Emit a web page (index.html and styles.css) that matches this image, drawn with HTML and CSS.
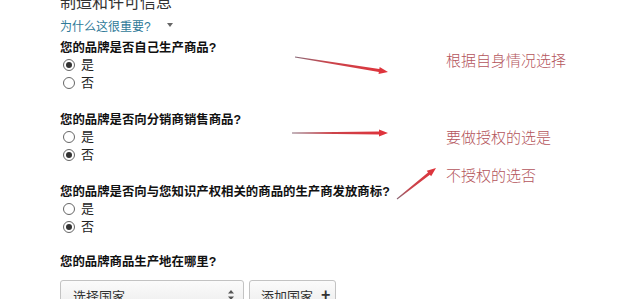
FILE: index.html
```html
<!DOCTYPE html>
<html lang="zh-CN">
<head>
<meta charset="utf-8">
<title>制造和许可信息</title>
<link rel="stylesheet" href="styles.css">
</head>
<body>
<div class="page">
  <main class="form">
    <h2 class="title">制造和许可信息</h2>
    <div class="why"><span class="why-text">为什么这很重要?</span><span class="caret"></span></div>

    <section class="group">
      <div class="question">您的品牌是否自己生产商品?</div>
      <label class="option"><span class="radio checked"></span>是</label>
      <label class="option"><span class="radio"></span>否</label>
    </section>

    <section class="group">
      <div class="question">您的品牌是否向分销商销售商品?</div>
      <label class="option"><span class="radio"></span>是</label>
      <label class="option"><span class="radio checked"></span>否</label>
    </section>

    <section class="group">
      <div class="question">您的品牌是否向与您知识产权相关的商品的生产商发放商标?</div>
      <label class="option"><span class="radio"></span>是</label>
      <label class="option"><span class="radio checked"></span>否</label>
    </section>

    <section class="group last">
      <div class="question">您的品牌商品生产地在哪里?</div>
      <div class="controls">
        <div class="select">
          <span>选择国家</span>
          <svg class="updown" width="6" height="10" viewBox="0 0 6 10"><path d="M3 0 L6 3.5 H0 Z M3 10 L6 6.5 H0 Z" fill="#555"/></svg>
        </div>
        <div class="button"><span>添加国家</span><span class="plus">+</span></div>
      </div>
    </section>
  </main>

  <div class="notes">
    <p class="note">根据自身情况选择</p>
    <p class="note n2">要做授权的选是</p>
    <p class="note n3">不授权的选否</p>
  </div>

  <svg class="arrows" width="640" height="299" viewBox="0 0 640 299">
    <defs>
      <linearGradient id="g1" x1="0" y1="0" x2="1" y2="0">
        <stop offset="0" stop-color="#8a6a78"/>
        <stop offset="0.35" stop-color="#c9454c"/>
        <stop offset="1" stop-color="#e0323a"/>
      </linearGradient>
    </defs>
    <polygon fill="url(#g1)" points="295.08,56.51 379.34,69.09 379.66,67.1 388,72 378.54,74 378.86,72.05 294.92,57.49"/>
    <polygon fill="url(#g1)" points="292,132.6 379,131.6 379,129.5 388,133 379,136.5 379,134.4 292,133.4"/>
    <polygon fill="url(#g1)" points="396.69,198.61 428.02,172.43 426.77,170.86 436,168 431.13,176.34 429.88,174.77 397.31,199.39"/>
  </svg>
</div>
</body>
</html>
```

FILE: styles.css
```css
html, body {
  margin: 0;
  padding: 0;
  background: #ffffff;
}

body {
  font-family: "Liberation Sans", "Noto Sans CJK SC", sans-serif;
  color: #222;
  overflow: hidden;
  width: 640px;
  height: 299px;
}

.page {
  position: relative;
  width: 640px;
  height: 299px;
  overflow: hidden;
}

.form {
  padding-left: 60px;
  width: 340px;
}

.title {
  margin: -6px 0 0 0;
  height: 18px;
  font-size: 16px;
  line-height: 18px;
  font-weight: normal;
  color: #333;
}

.why {
  margin-top: 6px;
  height: 18px;
  line-height: 18px;
  font-size: 12px;
  color: #2f7a99;
  display: flex;
  align-items: center;
}

.caret {
  margin-left: 16px;
  width: 0;
  height: 0;
  border-left: 3px solid transparent;
  border-right: 3px solid transparent;
  border-top: 4px solid #666;
  margin-top: -4px;
}

.group {
  margin-top: 3px;
  margin-bottom: 19px;
}

.group + .group {
  margin-top: 0;
}

.question {
  height: 18px;
  line-height: 18px;
  font-size: 12.4px;
  font-weight: bold;
  color: #111;
  white-space: nowrap;
}

.option {
  display: flex;
  align-items: center;
  height: 18px;
  line-height: 18px;
  font-size: 13px;
  color: #222;
}

.option:first-of-type {
  margin-top: -1px;
}

.radio {
  box-sizing: border-box;
  width: 12px;
  height: 12px;
  border: 1px solid #666;
  border-radius: 50%;
  margin-left: 3px;
  margin-right: 6px;
  display: flex;
  align-items: center;
  justify-content: center;
  background: #fff;
}

.radio.checked::after {
  content: "";
  width: 6px;
  height: 6px;
  border-radius: 50%;
  background: #333;
}

.group.last .question {
  margin-top: -2px;
}

.controls {
  display: flex;
  gap: 5px;
  margin-top: 9px;
}

.select,
.button {
  box-sizing: border-box;
  height: 30px;
  border: 1px solid #c3c3c3;
  border-radius: 3px;
  background: linear-gradient(#fbfbfb, #ececec);
  font-size: 13px;
  color: #333;
  display: flex;
  align-items: center;
}

.select {
  width: 184px;
  padding: 0 9px 0 12px;
  justify-content: space-between;
}

.button {
  width: 87px;
  padding-left: 11px;
  gap: 8px;
}

.plus {
  font-weight: bold;
  font-size: 16px;
}

.notes {
  position: absolute;
  left: 446px;
  top: 50px;
  display: flex;
  flex-direction: column;
}

.note {
  margin: 0;
  height: 20px;
  line-height: 20px;
  font-size: 15px;
  color: #b4555c;
  font-family: "Noto Sans CJK SC", sans-serif;
  font-weight: 300;
  white-space: nowrap;
}

.note.n2 {
  margin-top: 57px;
}

.note.n3 {
  margin-top: 18px;
}

.arrows {
  position: absolute;
  left: 0;
  top: 0;
  pointer-events: none;
}
```
